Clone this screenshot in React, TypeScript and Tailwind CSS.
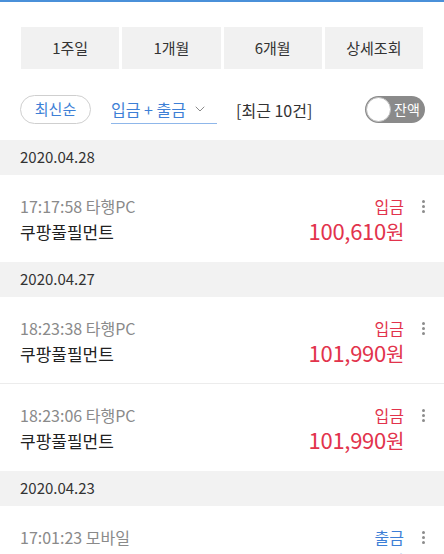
import { ChevronDown } from "lucide-react";

type Tx = {
  time: string;
  channel: string;
  name: string;
  kind: "입금" | "출금";
  amount: string;
};

type Group = { date: string; items: Tx[] };

const groups: Group[] = [
  {
    date: "2020.04.28",
    items: [{ time: "17:17:58", channel: "타행PC", name: "쿠팡풀필먼트", kind: "입금", amount: "100,610" }],
  },
  {
    date: "2020.04.27",
    items: [
      { time: "18:23:38", channel: "타행PC", name: "쿠팡풀필먼트", kind: "입금", amount: "101,990" },
      { time: "18:23:06", channel: "타행PC", name: "쿠팡풀필먼트", kind: "입금", amount: "101,990" },
    ],
  },
  {
    date: "2020.04.23",
    items: [{ time: "17:01:23", channel: "모바일", name: "쿠팡", kind: "출금", amount: "32,000" }],
  },
];

const tabs = ["1주일", "1개월", "6개월", "상세조회"];

function Dots() {
  return (
    <div className="flex flex-col items-center gap-[2px] w-[6px]">
      <span className="w-[3px] h-[3px] rounded-full bg-[#8c8c8c]" />
      <span className="w-[3px] h-[3px] rounded-full bg-[#8c8c8c]" />
      <span className="w-[3px] h-[3px] rounded-full bg-[#8c8c8c]" />
    </div>
  );
}

function Row({ tx, last }: { tx: Tx; last: boolean }) {
  const color = tx.kind === "입금" ? "text-[#e2334c]" : "text-[#3d7fd6]";
  return (
    <div className={`h-[87px] flex pl-[20px] pr-[18px] pt-[20px] ${last ? "" : "border-b border-[#ececec]"}`}>
      <div className="flex-1 flex flex-col">
        <div className="text-[16px] leading-[22px] text-[#8a8a8a]">
          {tx.time} {tx.channel}
        </div>
        <div className="text-[17px] leading-[26px] mt-[2px] text-[#222]">{tx.name}</div>
      </div>
      <div className="flex flex-col items-end">
        <div className={`text-[16px] leading-[22px] ${color}`}>{tx.kind}</div>
        <div className={`text-[22px] leading-[28px] -mt-[1px] tracking-[-0.3px] ${color}`}>
          {tx.amount}
          <span className="text-[20px]">원</span>
        </div>
      </div>
      <div className="w-[22px] flex justify-end pt-[5px]">
        <Dots />
      </div>
    </div>
  );
}

export default function App() {
  return (
    <div
      className="w-[444px] h-[554px] overflow-hidden bg-white"
      style={{ fontFamily: '"Noto Sans CJK KR", "Noto Sans", sans-serif' }}
    >
      <div className="h-[2px] bg-[#4a90d9]" />

      <div className="grid grid-cols-4 gap-[3px] pl-[21px] pr-[21px] mt-[25px]">
        {tabs.map((t) => (
          <button
            key={t}
            className="h-[42px] bg-[#f1f1f1] text-[15px] text-[#333] flex items-center justify-center"
          >
            {t}
          </button>
        ))}
      </div>

      <div className="flex items-center pl-[20px] pr-[19px] mt-[26px] h-[29px]">
        <div className="h-[29px] w-[71px] rounded-full border border-[#cfcfcf] flex items-center justify-center text-[15px] text-[#3d7fd6]">
          최신순
        </div>
        <div className="ml-[20px] h-[29px] w-[106px] flex items-center border-b border-[#8fb7ea] text-[16px] text-[#3d7fd6]">
          <span>입금 + 출금</span>
          <ChevronDown className="w-[16px] h-[16px] ml-[6px] text-[#8a8a8a]" strokeWidth={1.5} />
        </div>
        <div className="ml-[19px] text-[16px] text-[#333]">[최근 10건]</div>
        <div className="ml-auto h-[27px] w-[60px] rounded-full bg-[#8a8a8a] flex items-center">
          <span className="w-[25px] h-[25px] rounded-full bg-white border border-[#bdbdbd] ml-[1px]" />
          <span className="ml-[3px] text-[14px] text-white">잔액</span>
        </div>
      </div>

      <div className="mt-[16px]">
        {groups.map((g) => (
          <div key={g.date}>
            <div className="h-[35px] bg-[#f2f2f2] flex items-center pl-[20px] text-[15px] text-[#333]">
              {g.date}
            </div>
            {g.items.map((tx, i) => (
              <Row key={tx.time} tx={tx} last={i === g.items.length - 1} />
            ))}
          </div>
        ))}
      </div>
    </div>
  );
}
